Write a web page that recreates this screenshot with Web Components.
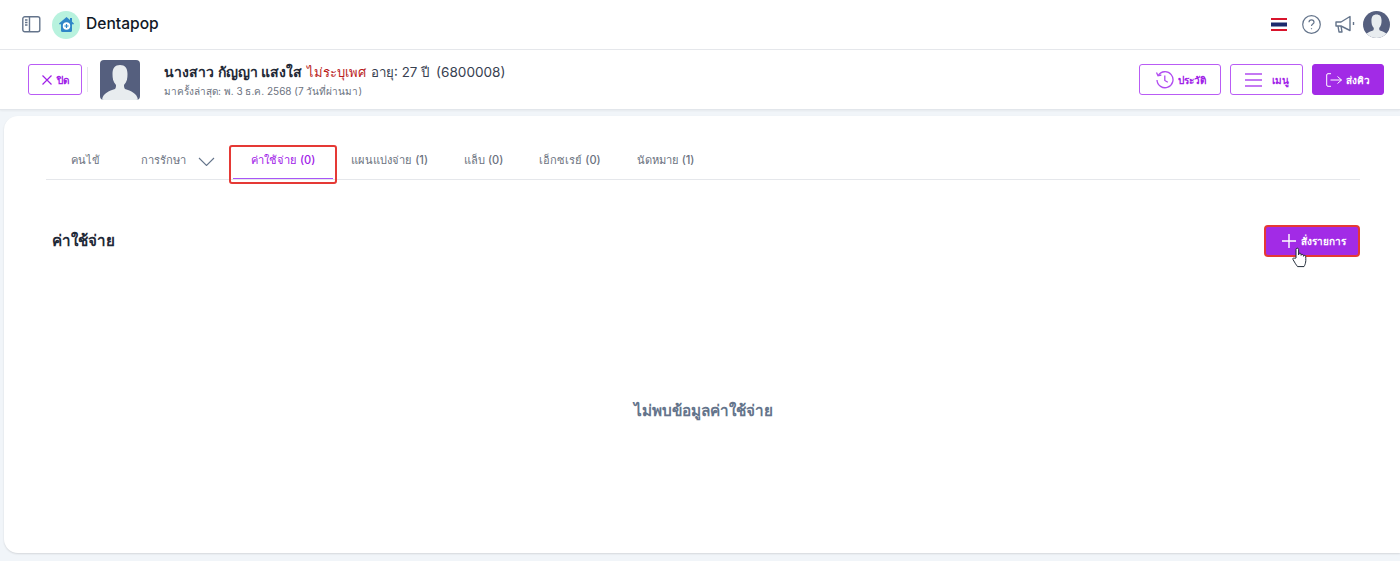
<!DOCTYPE html>
<html lang="th">
<head>
<meta charset="utf-8">
<title>Dentapop</title>
<style>
  html, body { margin: 0; height: 100%; }
  body {
    background: #f1f5f9;
    color: #1e293b;
    font-family: Inter, "Noto Sans", sans-serif;
    overflow: hidden;
  }
</style>
</head>
<body>
<app-topbar></app-topbar>
<patient-bar></patient-bar>
<main-card>
  <tab-bar>
    <tab-item>คนไข้</tab-item>
    <tab-item chevron>การรักษา</tab-item>
    <tab-item active>ค่าใช้จ่าย (0)</tab-item>
    <tab-item>แผนแบ่งจ่าย (1)</tab-item>
    <tab-item>แล็บ (0)</tab-item>
    <tab-item>เอ็กซเรย์ (0)</tab-item>
    <tab-item>นัดหมาย (1)</tab-item>
  </tab-bar>
  <section-head title="ค่าใช้จ่าย"></section-head>
  <empty-note>ไม่พบข้อมูลค่าใช้จ่าย</empty-note>
</main-card>

<script>
const AVATAR = `
  <path fill="#e8ecef" d="M2 40C3 33 9 31 15 29C16 28 16 26 16 25C13 22 12.500 18 12.500 14C12.500 8 15 5 20 5C25 5 27.500 8 27.500 14C27.500 18 27 22 24 25C24 26 24 28 25 29C31 31 37 33 38 40Z"/>`;

class AppTopbar extends HTMLElement {
  constructor() {
    super();
    this.attachShadow({ mode: "open" });
    this.shadowRoot.innerHTML = `
      <style>
        :host {
          display: flex;
          align-items: center;
          justify-content: space-between;
          height: 49px;
          padding: 0 10px 0 22px;
          background: #fff;
          border-bottom: 1px solid #e5e7eb;
        }
        .left, .right { display: flex; align-items: center; }
        .logo {
          width: 28px; height: 28px; margin-left: 11px; border-radius: 50%;
          background: #b8f2de; display: flex; align-items: center; justify-content: center;
        }
        .name { margin: 0 0 1px 6px; font: 500 15.600px/1 Inter, sans-serif; color: #111827; }
        svg { display: block; }
        .flag { width: 16px; height: 13px; margin-right: 15px; }
        .help { margin-right: 14px; }
        .horn { margin-right: 8px; }
        .avatar { width: 27px; height: 27px; border-radius: 50%; background: #555f7e; overflow: hidden; }
      </style>
      <div class="left">
        <svg width="19" height="17" viewBox="0 0 19 17" fill="none" stroke="#64748b" stroke-width="1.4">
          <rect x=".8" y=".8" width="17" height="15" rx="2"/>
          <path d="M7.5 1v15M3 4h2.5M3 6.500h2.500M3 9h2.500"/>
        </svg>
        <div class="logo">
          <svg width="15" height="15" viewBox="0 0 15 15">
            <path fill="#2f86c8" d="M7.500 0 0 6.500 1 7.700l1-.9V13.500A1.500 1.500 0 0 0 3.500 15h8a1.500 1.500 0 0 0 1.500-1.500V6.800l1 .9 1-1.200L13 4.800V1h-2v2.100z"/>
            <circle cx="7.500" cy="9" r="3.700" fill="#fff"/>
            <path fill="#2f86c8" d="M6.900 6.900h1.200v1.500h1.500v1.200H8.100v1.500H6.900V9.600H5.400V8.400h1.500z"/>
          </svg>
        </div>
        <span class="name">Dentapop</span>
      </div>
      <div class="right">
        <svg class="flag" viewBox="0 0 16 13">
          <rect width="16" height="13" fill="#fff"/>
          <rect width="16" height="2" fill="#d8142c"/>
          <rect y="11" width="16" height="2" fill="#d8142c"/>
          <rect y="4.500" width="16" height="4" fill="#1c2a6d"/>
        </svg>
        <svg class="help" width="19" height="19" viewBox="0 0 19 19" fill="none" stroke="#64748b" stroke-width="1.200">
          <circle cx="9.500" cy="9.500" r="8.800"/>
          <path d="M7 7.300c0-1.500 1.100-2.400 2.500-2.400S12 5.800 12 7.200c0 1.900-2.500 1.900-2.500 3.900"/>
          <path d="M9.500 13.200v1"/>
        </svg>
        <svg class="horn" width="20" height="19" viewBox="0 0 20 19" fill="none" stroke="#64748b" stroke-width="1.400" stroke-linejoin="round">
          <path d="M1 7h5l9-5.500v14L6 11H1z"/>
          <path d="M3 11l1 6h3l-1-6M18.500 7v3"/>
        </svg>
        <div class="avatar">
          <svg width="27" height="27" viewBox="0 0 40 40">${AVATAR}</svg>
        </div>
      </div>`;
  }
}
customElements.define("app-topbar", AppTopbar);

class ActionButton extends HTMLElement {
  constructor() {
    super();
    this.attachShadow({ mode: "open" });
    this.shadowRoot.innerHTML = `
      <style>
        :host {
          display: inline-flex;
          align-items: center;
          justify-content: center;
          box-sizing: border-box;
          height: 31px;
          border: 1px solid #b95cf5;
          border-radius: 3px;
          background: #fff;
          color: #a020e8;
          font: 600 10px/1 Inter, "Noto Sans", sans-serif;
          gap: 4px;
        }
        :host([solid]) { background: #a22be6; border-color: #a22be6; color: #fff; }
        ::slotted(svg) { display: block; flex: none; }
      </style>
      <slot></slot>`;
  }
}
customElements.define("action-button", ActionButton);

class PatientBar extends HTMLElement {
  constructor() {
    super();
    this.attachShadow({ mode: "open" });
    this.shadowRoot.innerHTML = `
      <style>
        :host {
          display: flex;
          align-items: center;
          box-sizing: border-box;
          height: 60px;
          padding: 0 16px 0 28px;
          background: #fff;
          border-bottom: 1px solid #e2e6eb;
          box-shadow: 0 1px 2px rgba(0,0,0,.05);
        }
        .close { width: 54px; }
        .sep { width: 1px; height: 25px; margin: 0 12px 0 5px; background: #e5e7eb; }
        .photo { width: 40px; height: 40px; border-radius: 4px; background: #555f7e; overflow: hidden; flex: none; }
        .info { margin-left: 24px; flex: 1; }
        .line { display: flex; align-items: center; font-size: 13.300px; line-height: 20px; color: #374151; height: 20px; }
        .line b { font-size: 14px; font-weight: 600; color: #1f2937; }
        .red { color: #b91c1c; font-size: 13px; font-weight: 500; margin: 0 5px 0 5px; }
        .id { margin-left: 7px; font-size: 13.600px; }
        .sub { font-size: 10px; line-height: 14px; margin-top: 2px; color: #6b7280; }
        .actions { display: flex; gap: 9px; }
        .hist { width: 82px; }
        .menu { width: 73px; }
        .send { width: 72px; }
        svg { display: block; }
      </style>
      <action-button class="close">
        <svg width="12" height="12" viewBox="0 0 12 12" fill="none" stroke="#a020e8" stroke-width="1.200"><path d="M1.500 1.500l9 9M10.500 1.500l-9 9"/></svg>
        <span>ปิด</span>
      </action-button>
      <div class="sep"></div>
      <div class="photo"><svg width="40" height="40" viewBox="0 0 40 40">${AVATAR}</svg></div>
      <div class="info">
        <div class="line"><b>นางสาว กัญญา แสงใส</b><span class="red">ไม่ระบุเพศ</span><span>อายุ: 27 ปี</span><span class="id">(6800008)</span></div>
        <div class="sub">มาครั้งล่าสุด: พ. 3 ธ.ค. 2568 (7 วันที่ผ่านมา)</div>
      </div>
      <div class="actions">
        <action-button class="hist">
          <svg width="19" height="19" viewBox="0 0 19 19" fill="none" stroke="#b14cf0" stroke-width="1.300">
            <path d="M3.200 5.500A8 8 0 1 1 2 10"/><path d="M1.500 2.500l1.500 3.300 3.300-.8M9.800 5.500v5l3 1.800"/>
          </svg>
          <span>ประวัติ</span>
        </action-button>
        <action-button class="menu">
          <svg width="17" height="14" viewBox="0 0 17 14" fill="none" stroke="#b14cf0" stroke-width="1.300"><path d="M0 1h17M0 7h17M0 13h17"/></svg>
          <span style="margin-left:6px">เมนู</span>
        </action-button>
        <action-button class="send" solid>
          <svg width="16" height="14" viewBox="0 0 16 14" fill="none" stroke="#fff" stroke-width="1"><path d="M5 .7H2A1.300 1.300 0 0 0 .7 2v10A1.300 1.300 0 0 0 2 13.300h3M4.500 7h11M11.500 3.500 15.500 7l-4 3.500"/></svg>
          <span>ส่งคิว</span>
        </action-button>
      </div>`;
  }
}
customElements.define("patient-bar", PatientBar);

class MainCard extends HTMLElement {
  constructor() {
    super();
    this.attachShadow({ mode: "open" });
    this.shadowRoot.innerHTML = `
      <style>
        :host {
          display: flex;
          flex-direction: column;
          box-sizing: border-box;
          height: 437px;
          margin: 6px 0 0 4px;
          padding: 23px 40px 0 42px;
          background: #fff;
          border-radius: 14px 0 0 14px;
          box-shadow: 0 1px 2px rgba(0,0,0,.12);
        }
      </style>
      <slot></slot>`;
  }
}
customElements.define("main-card", MainCard);

class TabBar extends HTMLElement {
  constructor() {
    super();
    this.attachShadow({ mode: "open" });
    this.shadowRoot.innerHTML = `
      <style>
        :host {
          display: flex;
          align-items: stretch;
          height: 40px;
          padding-left: 7px;
          border-bottom: 1px solid #e5e7eb;
          font: 500 11.100px/1 Inter, "Noto Sans", sans-serif;
        }
        ::slotted(:first-child) { margin-right: 5px; }
      </style>
      <slot></slot>`;
  }
}
customElements.define("tab-bar", TabBar);

class TabItem extends HTMLElement {
  constructor() {
    super();
    this.attachShadow({ mode: "open" });
    this.shadowRoot.innerHTML = `
      <style>
        :host {
          display: flex;
          align-items: center;
          box-sizing: border-box;
          padding: 4px 18px 0;
          height: 40px;
          color: #6b7280;
          white-space: nowrap;
          position: relative;
        }
        :host([active]) { color: #a020e8; }
        :host([active])::after {
          content: "";
          position: absolute;
          left: 0; right: 0; bottom: 0;
          height: 1px;
          background: #a855f7;
        }
        :host([active])::before {
          content: "";
          position: absolute;
          inset: 6px -4px -5px;
          border: 2px solid #e53935;
          border-radius: 3px;
        }
        svg { display: none; margin-left: 12px; }
        :host([chevron]) svg { display: block; }
      </style>
      <slot></slot>
      <svg width="17" height="9" viewBox="0 0 17 9" fill="none" stroke="#64748b" stroke-width="1.100"><path d="M1 1l7.500 7.500L16 1"/></svg>`;
  }
}
customElements.define("tab-item", TabItem);

class SectionHead extends HTMLElement {
  constructor() {
    super();
    this.attachShadow({ mode: "open" });
    this.shadowRoot.innerHTML = `
      <style>
        :host {
          display: flex;
          align-items: center;
          justify-content: space-between;
          margin-top: 45px;
          padding-left: 6px;
          height: 32px;
        }
        h2 { margin: 0 0 1px; font: 600 15.200px/1 Inter, "Noto Sans", sans-serif; color: #1f2937; }
        .wrap { position: relative; }
        .add {
          display: flex; align-items: center; justify-content: center; gap: 5px;
          box-sizing: border-box; width: 96px; height: 32px; padding-left: 3px;
          background: #a22be6; color: #fff; border: 2px solid #e53935; border-radius: 4px;
          font: 600 10px/1 Inter, "Noto Sans", sans-serif;
        }
        .hand { position: absolute; left: 28px; top: 22px; }
        svg { display: block; }
      </style>
      <h2>${this.getAttribute("title") || ""}</h2>
      <div class="wrap">
        <div class="add">
          <svg width="14" height="14" viewBox="0 0 14 14" fill="none" stroke="#fff" stroke-width="1.400"><path d="M7 0v14M0 7h14"/></svg>
          <span>สั่งรายการ</span>
        </div>
        <svg class="hand" width="15" height="21" viewBox="0 0 15 21" fill="#fff" stroke="#1f2937" stroke-width="1" stroke-linejoin="round">
          <path d="M4 11V2.500a1.300 1.300 0 0 1 2.600 0V8l.1-1a1.200 1.200 0 0 1 2.300 0l.1 1.300a1.200 1.200 0 0 1 2.300 0l.1 1a1.100 1.100 0 0 1 2.200.3c.2 3 .2 5-.4 7-.4 1.500-1 2.400-1.300 3H5.500c-.6-1-1.600-2-3-4.500L1 12.500c-.6-1.200.9-2.200 1.800-1.200z"/>
        </svg>
      </div>`;
  }
}
customElements.define("section-head", SectionHead);

class EmptyNote extends HTMLElement {
  constructor() {
    super();
    this.attachShadow({ mode: "open" });
    this.shadowRoot.innerHTML = `
      <style>
        :host {
          display: block;
          margin-top: 144px;
          text-align: center;
          font: 600 15.300px/20px Inter, "Noto Sans", sans-serif;
          color: #64748b;
        }
      </style>
      <slot></slot>`;
  }
}
customElements.define("empty-note", EmptyNote);
</script>
</body>
</html>
